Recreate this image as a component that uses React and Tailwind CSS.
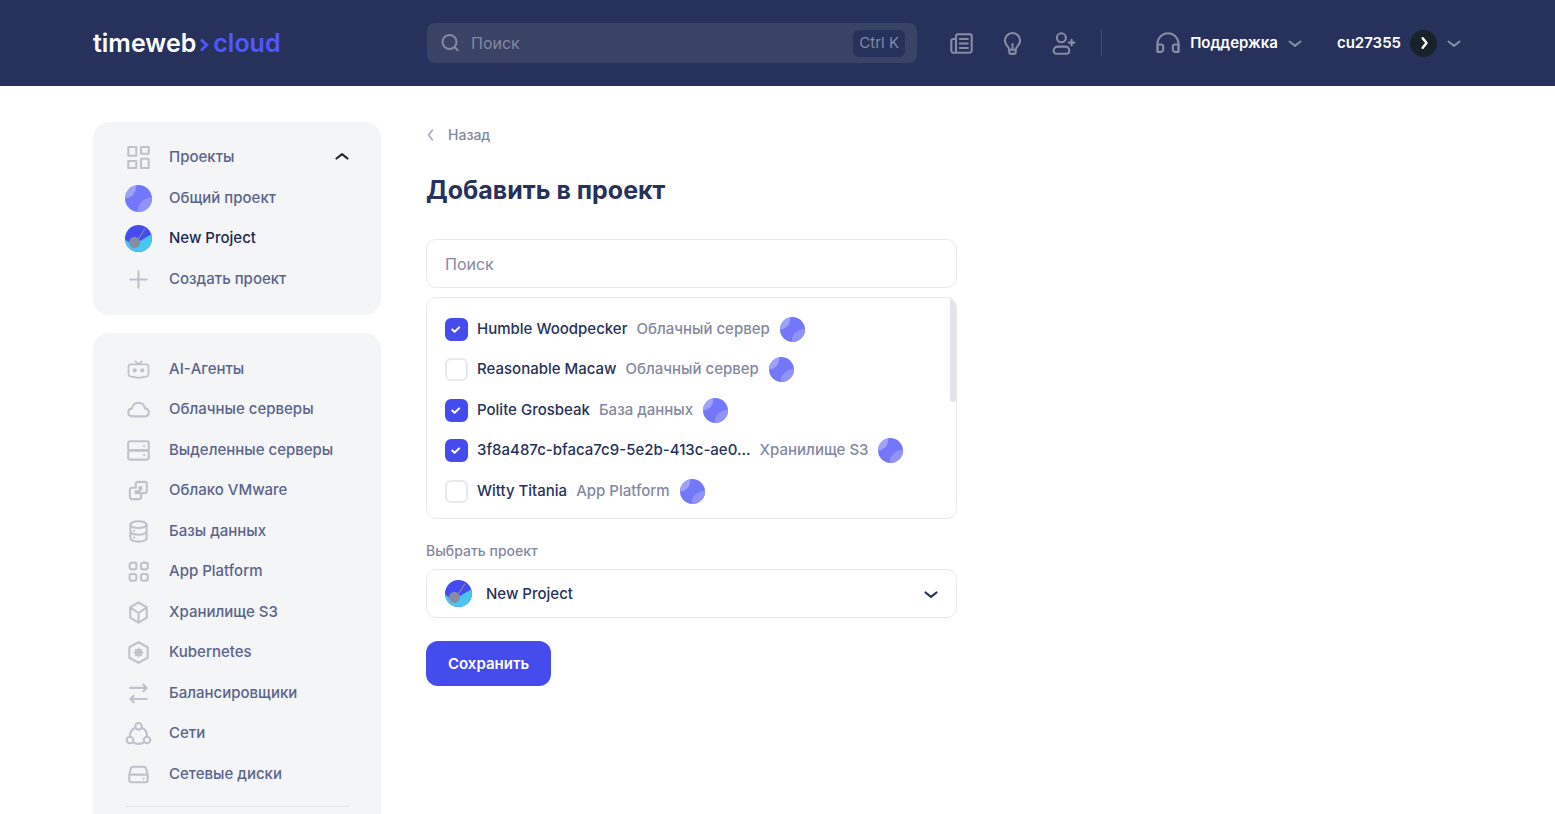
import { useState } from 'react'

const PROJECTS = [
  { id: 'common', name: 'Общий проект', Avatar: CommonAvatar },
  { id: 'new', name: 'New Project', Avatar: NewProjectAvatar }
]

const SERVICES = [
  { name: 'AI-Агенты', Icon: AgentIcon },
  { name: 'Облачные серверы', Icon: CloudIcon },
  { name: 'Выделенные серверы', Icon: ServerIcon },
  { name: 'Облако VMware', Icon: VmwareIcon },
  { name: 'Базы данных', Icon: DatabaseIcon },
  { name: 'App Platform', Icon: AppsIcon },
  { name: 'Хранилище S3', Icon: CubeIcon },
  { name: 'Kubernetes', Icon: KubernetesIcon },
  { name: 'Балансировщики', Icon: BalancerIcon },
  { name: 'Сети', Icon: NetworkIcon },
  { name: 'Сетевые диски', Icon: DiskIcon }
]

const RESOURCES = [
  { id: 'r1', name: 'Humble Woodpecker', type: 'Облачный сервер' },
  { id: 'r2', name: 'Reasonable Macaw', type: 'Облачный сервер' },
  { id: 'r3', name: 'Polite Grosbeak', type: 'База данных' },
  { id: 'r4', name: '3f8a487c-bfaca7c9-5e2b-413c-ae0...', type: 'Хранилище S3' },
  { id: 'r5', name: 'Witty Titania', type: 'App Platform' }
]

function App() {
  return (
    <div className="flex h-screen flex-col overflow-hidden bg-white font-['Inter','Noto_Sans',sans-serif] text-[15px] leading-5 font-medium text-[#26325c]">
      <Header />
      <div className="flex min-h-0 flex-1 gap-[45px] px-[93px] pt-9">
        <Sidebar />
        <AddToProject />
      </div>
    </div>
  )
}

function Header() {
  return (
    <header className="flex h-[86px] shrink-0 items-center gap-[46px] bg-[#26325c] px-[93px]">
      <a href="#" className="flex w-72 shrink-0 items-center text-[25px] leading-8 font-semibold text-white">
        timeweb
        <svg className="mx-1 mt-1 h-4 w-[9px]" viewBox="0 0 9 16" fill="none" stroke="#5158ff" strokeWidth="2.8">
          <path d="M1 2.5 6.7 8 1 13.5" />
        </svg>
        <span className="text-[#5158ff]">cloud</span>
      </a>

      <div className="flex min-w-0 flex-1 items-center">
        <label className="flex h-10 w-full max-w-[490px] items-center gap-[10px] rounded-lg bg-[#384366] pr-3 pl-[14px] text-base font-normal text-[#8389a0]">
          <svg className="h-5 w-5 shrink-0" viewBox="0 0 20 20" fill="none" stroke="currentColor" strokeWidth="2" strokeLinecap="round">
            <circle cx="8.5" cy="9" r="7" />
            <path d="m13.7 14.2 3 3" />
          </svg>
          <input
            type="search"
            aria-label="Поиск"
            placeholder="Поиск"
            className="min-w-0 flex-1 bg-transparent outline-none placeholder:text-[#8389a0]"
          />
          <kbd className="flex h-[27px] items-center rounded-md bg-[#26325c] px-[6px] font-['Inter','Noto_Sans',sans-serif] text-[15px]">
            Ctrl K
          </kbd>
        </label>

        <div className="ml-[31px] flex shrink-0 items-center gap-6 text-[#858ca3]">
          <button aria-label="Новости"><NewsIcon /></button>
          <button aria-label="Идеи"><BulbIcon /></button>
          <button aria-label="Пригласить"><InviteIcon /></button>
          <span className="h-[26px] w-px bg-[#46507a]" />
        </div>

        <div className="ml-auto flex shrink-0 items-center gap-[34px] pl-6 text-white">
          <button className="flex items-center gap-[9px] font-semibold">
            <HeadphonesIcon />
            Поддержка
            <Chevron className="h-4 w-4 text-[#858ca3]" />
          </button>
          <button className="flex items-center gap-[9px] font-semibold">
            cu27355
            <span className="flex h-[27px] w-[27px] items-center justify-center rounded-full bg-[#18222b]">
              <Chevron className="h-[14px] w-[14px] -rotate-90" strokeWidth="2.8" />
            </span>
            <Chevron className="h-4 w-4 text-[#858ca3]" />
          </button>
        </div>
      </div>
    </header>
  )
}

function Sidebar() {
  return (
    <aside className="flex w-72 shrink-0 flex-col gap-[18px] text-[#5a648c]">
      <div className="rounded-2xl bg-[#f4f5f7] px-8 pt-[15px] pb-4">
        <ul>
          <li className="odd:mb-px">
            <button className="flex h-10 w-full items-center gap-[17px]">
              <GridIcon />
              Проекты
              <Chevron className="-mr-px ml-auto h-4 w-4 rotate-180 text-[#22262b]" strokeWidth="2.2" />
            </button>
          </li>
          {PROJECTS.map(({ id, name, Avatar }) => (
            <li key={id} className="odd:mb-px">
              <a href="#" className={`flex h-10 items-center gap-[17px] ${id === 'new' ? 'text-[#1c2953]' : ''}`}>
                <Avatar className="h-[27px] w-[27px]" />
                {name}
              </a>
            </li>
          ))}
          <li>
            <button className="flex h-10 w-full items-center gap-[17px]">
              <PlusIcon />
              Создать проект
            </button>
          </li>
        </ul>
      </div>

      <nav className="flex-1 rounded-t-2xl bg-[#f4f5f7] px-8 pt-4">
        <ul className="border-b border-[#e5e6ec] pb-3">
          {SERVICES.map(({ name, Icon }) => (
            <li key={name} className="even:mb-px">
              <a href="#" className="flex h-10 items-center gap-[17px]">
                <Icon />
                {name}
              </a>
            </li>
          ))}
        </ul>
      </nav>
    </aside>
  )
}

function AddToProject() {
  const [query, setQuery] = useState('')
  const [selected, setSelected] = useState(['r1', 'r3', 'r4'])
  const [project, setProject] = useState('new')

  const toggle = (id) => {
    setSelected((prev) => (prev.includes(id) ? prev.filter((x) => x !== id) : [...prev, id]))
  }

  const visible = RESOURCES.filter((r) => r.name.toLowerCase().includes(query.toLowerCase()))
  const { Avatar } = PROJECTS.find((p) => p.id === project)

  return (
    <main className="w-full max-w-[531px]">
      <a href="#" className="flex items-center gap-[10px] pt-[3px] text-sm leading-5 text-[#8389a0]">
        <Chevron className="-ml-[2px] h-[14px] w-[14px] rotate-90 text-[#a9aebd]" />
        Назад
      </a>

      <h1 className="mt-[27px] text-[25px] leading-9 font-bold">Добавить в проект</h1>

      <input
        type="text"
        aria-label="Поиск"
        placeholder="Поиск"
        value={query}
        onChange={(e) => setQuery(e.target.value)}
        className="mt-[31px] block h-[49px] w-full rounded-[10px] border border-[#e8e9ee] px-[18px] text-base font-normal outline-none placeholder:text-[#8389a0]"
      />

      <div className="relative mt-[9px] overflow-hidden rounded-[10px] border border-[#e8e9ee]">
        <ul className="px-[18px] pt-[11px] pb-[7px]">
          {visible.map((r) => (
            <li key={r.id} className="even:mb-px">
              <label className="flex h-10 items-center gap-[9px]">
                <span className="relative h-[23px] w-[23px] shrink-0">
                  <input
                    type="checkbox"
                    checked={selected.includes(r.id)}
                    onChange={() => toggle(r.id)}
                    className="peer block h-[23px] w-[23px] appearance-none rounded-md border-2 border-[#e8e9ee] bg-white checked:border-[#444ced] checked:bg-[#444ced]"
                  />
                  <svg
                    className="pointer-events-none absolute inset-0 hidden peer-checked:block"
                    viewBox="0 0 23 23"
                    fill="none"
                    stroke="#fff"
                    strokeWidth="2"
                    strokeLinecap="round"
                    strokeLinejoin="round"
                  >
                    <path d="m7.2 11.6 2.4 2.2 4.6-4.4" />
                  </svg>
                </span>
                <span>{r.name}</span>
                <span className="text-[#8389a0]">{r.type}</span>
                <CommonAvatar className="ml-px h-[25px] w-[25px]" />
              </label>
            </li>
          ))}
        </ul>
        <div className="absolute top-0 right-0 h-[104px] w-[6px] rounded-b-sm bg-[#e4e3e9]" />
      </div>

      <label htmlFor="project" className="mt-[22px] block text-sm leading-5 text-[#8389a0]">
        Выбрать проект
      </label>
      <div className="relative mt-2">
        <select
          id="project"
          value={project}
          onChange={(e) => setProject(e.target.value)}
          className="block h-[49px] w-full appearance-none rounded-[10px] border border-[#e8e9ee] bg-white pr-12 pl-[59px] outline-none"
        >
          {PROJECTS.map((p) => (
            <option key={p.id} value={p.id}>{p.name}</option>
          ))}
        </select>
        <Avatar className="pointer-events-none absolute top-[11px] left-[19px] h-[27px] w-[27px]" />
        <Chevron className="pointer-events-none absolute top-[17px] right-[18px] h-4 w-4" strokeWidth="2.2" />
      </div>

      <button className="mt-[23px] h-[45px] rounded-xl bg-[#444ced] px-[22px] font-semibold text-white">
        Сохранить
      </button>
    </main>
  )
}

function Icon({ children }) {
  return (
    <svg
      className="h-[27px] w-[27px] shrink-0"
      viewBox="0 0 27 27"
      fill="none"
      stroke="currentColor"
      strokeWidth="2.1"
      strokeLinecap="round"
      strokeLinejoin="round"
    >
      {children}
    </svg>
  )
}

function MenuIcon({ children }) {
  return (
    <span className="text-[#bec2cd]">
      <Icon>{children}</Icon>
    </span>
  )
}

function Chevron({ className, strokeWidth = '2' }) {
  return (
    <svg
      className={`shrink-0 ${className}`}
      viewBox="0 0 16 16"
      fill="none"
      stroke="currentColor"
      strokeWidth={strokeWidth}
      strokeLinecap="round"
      strokeLinejoin="round"
    >
      <path d="m2.5 6.5 5.5 4.4 5.5-4.4" />
    </svg>
  )
}

function CommonAvatar({ className }) {
  return (
    <svg className={`shrink-0 rounded-full ${className}`} viewBox="0 0 27 27">
      <path fill="#7377f9" d="M0 0h27v27H0z" />
      <circle cx="-.5" cy="2" r="11.5" fill="#9fa2fb" />
      <circle cx="27" cy="27" r="14.4" fill="#8f93fa" />
    </svg>
  )
}

function NewProjectAvatar({ className }) {
  return (
    <svg className={`shrink-0 rounded-full ${className}`} viewBox="0 0 27 27">
      <path fill="#444ced" d="M0 0h27v27H0z" />
      <path fill="#49c5f1" d="M0 14.5 8 20l19-11v18H0z" />
      <path stroke="#858ca3" strokeWidth="1.1" d="M12 16 20 3.7" />
      <circle cx="9.5" cy="17.4" r="5.6" fill="#858ca3" />
    </svg>
  )
}

function NewsIcon() {
  return (
    <Icon>
      <path d="M8 22.8V6a1.7 1.7 0 0 1 1.7-1.7H22A1.7 1.7 0 0 1 23.7 6v14.5a2.3 2.3 0 0 1-2.3 2.3H5.6a2.3 2.3 0 0 1-2.3-2.3v-9.8a1.7 1.7 0 0 1 1.7-1.7h3" />
      <path d="M11.8 9h8M11.8 13.5h8M11.8 18h8" />
    </Icon>
  )
}

function BulbIcon() {
  return (
    <Icon>
      <path d="M10.3 19.5c0-2.6-4.4-4.2-4.4-8.9a7.6 7.6 0 0 1 15.2 0c0 4.7-4.4 6.3-4.4 8.9" />
      <path d="M10.3 19.8h6.4v2.4a1.7 1.7 0 0 1-1.7 1.7h-3a1.7 1.7 0 0 1-1.7-1.7zM13.5 14v5.5" />
    </Icon>
  )
}

function InviteIcon() {
  return (
    <Icon>
      <circle cx="11.4" cy="7.8" r="4.5" />
      <path d="M3.6 20.7c0-2.4 1.9-4.1 4.3-4.1H15c2.4 0 4.3 1.7 4.3 4.1 0 1.7-1.2 3-2.9 3H6.5c-1.7 0-2.9-1.3-2.9-3zM21.6 9.8v5.6M18.8 12.6h5.6" />
    </Icon>
  )
}

function HeadphonesIcon() {
  return (
    <span className="text-[#858ca3]">
      <Icon>
        <path d="M3.5 21.6V13.8a10.5 10.5 0 0 1 21 0v7.8" />
        <path d="M3.5 14.5h3.4A2.3 2.3 0 0 1 9.2 16.8v2.6a2.5 2.5 0 0 1-2.5 2.5H3.5zM24.5 14.5h-3.4a2.3 2.3 0 0 0-2.3 2.3v2.6a2.5 2.5 0 0 0 2.5 2.5H24.5z" />
      </Icon>
    </span>
  )
}

function GridIcon() {
  return (
    <MenuIcon>
      <path d="M3.3 3h8v8.7h-8zM16 3h7.7v6.7H16zM3.3 17h8v7h-8zM16 14.8h7.7V24H16z" />
    </MenuIcon>
  )
}

function PlusIcon() {
  return (
    <MenuIcon>
      <path d="M13.5 5.3v16.4M5.3 13.5h16.4" />
    </MenuIcon>
  )
}

function AgentIcon() {
  return (
    <MenuIcon>
      <g strokeWidth="1.7">
        <path d="M5.5 8.4h16a2 2 0 0 1 2 2v7.9a2 2 0 0 1-1.6 2l-8.4 1.5-8.4-1.5a2 2 0 0 1-1.6-2v-7.9a2 2 0 0 1 2-2zM10.3 5.3l3.2 2.8 3.2-2.8" />
      </g>
      <circle cx="9.8" cy="14.3" r="2.1" fill="currentColor" stroke="none" />
      <circle cx="17.2" cy="14.3" r="2.1" fill="currentColor" stroke="none" />
    </MenuIcon>
  )
}

function CloudIcon() {
  return (
    <MenuIcon>
      <path d="M7.3 20.4c-2.4 0-4-1.7-4-3.9 0-2.1 1.5-3.8 3.7-4.1.6-3.3 3.2-5.7 6.5-5.7s5.9 2.4 6.5 5.7c2.2.3 3.7 2 3.7 4.1 0 2.2-1.6 3.9-4 3.9z" />
    </MenuIcon>
  )
}

function ServerIcon() {
  return (
    <MenuIcon>
      <rect x="3.2" y="4.2" width="20.6" height="9.2" rx="2" />
      <rect x="3.2" y="13.4" width="20.6" height="9.2" rx="2" />
      <path d="M19 9h.1M19 18h.1" />
    </MenuIcon>
  )
}

function VmwareIcon() {
  return (
    <MenuIcon>
      <path d="M10.8 10.8V6.9a2 2 0 0 1 2-2h7a2 2 0 0 1 2 2v7.2a2 2 0 0 1-2 2h-3.6v4a2 2 0 0 1-2 2h-7.3a2 2 0 0 1-2-2v-7.3a2 2 0 0 1 2-2z" />
      <path fill="currentColor" stroke="none" d="M13.5 9.3h3.9v4h-1.8v3.9h-6v-4h3.9z" />
    </MenuIcon>
  )
}

function DatabaseIcon() {
  return (
    <MenuIcon>
      <ellipse cx="13.5" cy="6.6" rx="8.1" ry="3.4" />
      <path d="M5.4 6.6v13.6c0 1.9 3.6 3.4 8.1 3.4s8.1-1.5 8.1-3.4V6.6M5.4 13.4c0 1.9 3.6 3.4 8.1 3.4s8.1-1.5 8.1-3.4M9 12.9h.1M9 19.6h.1" />
    </MenuIcon>
  )
}

function AppsIcon() {
  return (
    <MenuIcon>
      <rect x="4.6" y="4.6" width="6.8" height="6.8" rx="2.2" />
      <rect x="16" y="4.6" width="6.8" height="6.8" rx="2.2" />
      <rect x="4.6" y="16" width="6.8" height="6.8" rx="2.2" />
      <rect x="16" y="16" width="6.8" height="6.8" rx="2.2" />
    </MenuIcon>
  )
}

function CubeIcon() {
  return (
    <MenuIcon>
      <path d="m13.5 3.3 8.3 5v10.4l-8.3 5-8.3-5V8.3zM5.2 8.3l8.3 5.7 8.3-5.7M13.5 14v9.7" />
    </MenuIcon>
  )
}

function KubernetesIcon() {
  return (
    <MenuIcon>
      <path d="m13.5 3.3 9.2 4.9v10.6l-9.2 4.9-9.2-4.9V8.2z" />
      <circle cx="13.5" cy="13.5" r="3.7" fill="currentColor" stroke="none" />
      <path strokeWidth="1.4" d="M13.5 9v9M9 13.5h9M10.5 10.5l6 6M16.5 10.5l-6 6" />
    </MenuIcon>
  )
}

function BalancerIcon() {
  return (
    <MenuIcon>
      <path d="M5.3 7.9h16.2M18.3 4.6l3.3 3.3-3.3 3.3M21.7 19H5.5M8.7 15.7 5.4 19l3.3 3.3" />
    </MenuIcon>
  )
}

function NetworkIcon() {
  return (
    <MenuIcon>
      <circle cx="13.5" cy="6.3" r="3.3" />
      <circle cx="5" cy="20" r="3.3" />
      <circle cx="22" cy="20" r="3.3" />
      <path d="M10.3 7.8A9 9 0 0 0 5 16.5M16.7 7.8a9 9 0 0 1 5.3 8.7M8 22.4c3.3 1.8 7.7 1.8 11 0" />
    </MenuIcon>
  )
}

function DiskIcon() {
  return (
    <MenuIcon>
      <path d="M4.3 13.6 6 7.3A2 2 0 0 1 8 5.8h11a2 2 0 0 1 2 1.5l1.7 6.3v5.6a2 2 0 0 1-2 2H6.3a2 2 0 0 1-2-2zM4.3 13.6h18.4M18.5 17.6h.1" />
    </MenuIcon>
  )
}

export default App
